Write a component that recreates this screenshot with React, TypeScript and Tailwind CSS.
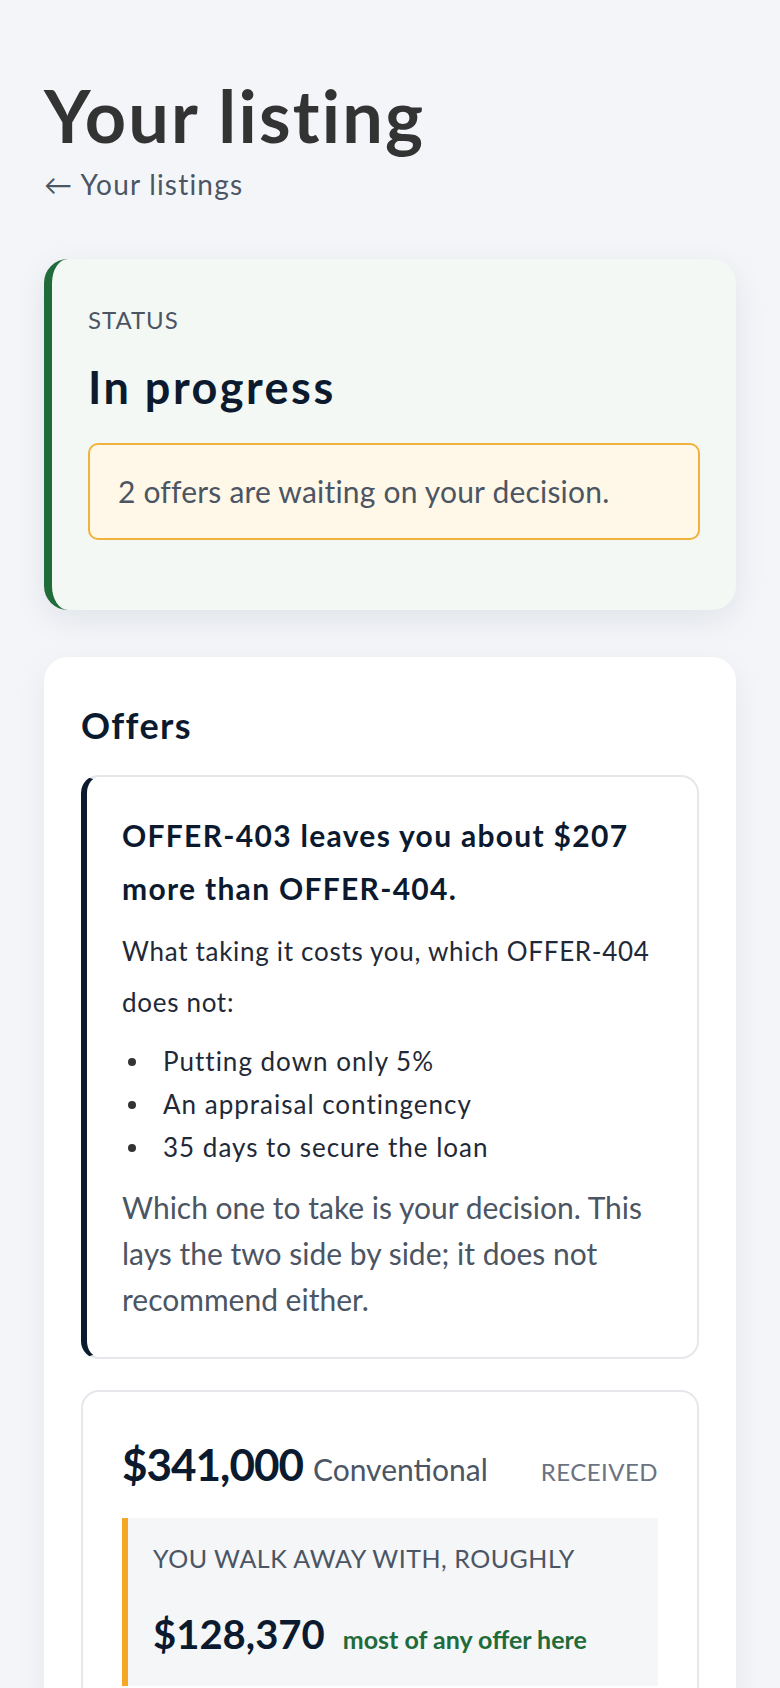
const BULLETS = ['Putting down only 5%', 'An appraisal contingency', '35 days to secure the loan'];

export default function App() {
    return (
        <div className="min-h-screen bg-[#f3f5f9] font-['Lato','Noto_Sans',sans-serif] px-[44px] pt-[75px] pb-16">
            {/* Header */}
            <h1 className="text-[72px] leading-[80px] font-bold tracking-[2.2px] text-[#333333]">Your listing</h1>
            <a className="block mt-[11px] text-[28px] leading-[36px] tracking-[1.2px] text-[#4b5563]">← Your listings</a>

            {/* Status */}
            <div className="mt-[57px] rounded-3xl border-l-8 border-[#1f6b3a] bg-[#f3f8f4] px-[36px] pt-[43px] pb-[70px] shadow-[0_10px_32px_rgba(15,23,42,0.08)]">
                <p className="text-[24px] leading-[36px] tracking-[0.04em] text-[#4b5563]">STATUS</p>
                <h2 className="mt-[23px] text-[45px] leading-[53px] font-bold tracking-[2.5px] text-[#0b1a2e]">In progress</h2>
                <div className="mt-[29px] rounded-[10px] border-2 border-[#f0b23a] bg-[#fff8e8] px-[28px] py-[24px]">
                    <p className="text-[30px] leading-[45px] tracking-[0.2px] text-[#4b5563]">2 offers are waiting on your decision.</p>
                </div>
            </div>

            {/* Offers */}
            <div className="mt-[47px] rounded-3xl bg-white px-[37px] pt-[47px] pb-10 shadow-[0_10px_32px_rgba(15,23,42,0.06)]">
                <h2 className="text-[36px] leading-[43px] font-bold tracking-[1.4px] text-[#0b1a2e]">Offers</h2>

                {/* Comparison */}
                <div className="mt-[28px] rounded-[18px] border-2 border-l-[6px] border-[#e5e7eb] border-l-[#0b1a2e] px-[35px] pt-[32px] pb-[35px]">
                    <p className="text-[30px] leading-[53px] font-bold tracking-[1.3px] text-[#0b1a2e]">
                        OFFER-403 leaves you about $207 more than OFFER-404.
                    </p>
                    <p className="mt-[11px] text-[26px] leading-[51px] tracking-[0.7px] text-[#1f2937]">
                        What taking it costs you, which OFFER-404 does not:
                    </p>
                    <ul className="mt-[12px] text-[26px] leading-[43px] tracking-[1px] text-[#1f2937]">
                        {BULLETS.map((b) => (
                            <li key={b} className="flex items-center">
                                <span className="ml-[6px] mr-[27px] h-[8px] w-[8px] shrink-0 rounded-full bg-[#333]" />
                                {b}
                            </li>
                        ))}
                    </ul>
                    <p className="mt-[15px] text-[30px] leading-[46px] text-[#4b5563]">
                        Which one to take is your decision. This lays the two side by side; it does not recommend either.
                    </p>
                </div>

                {/* Offer */}
                <div className="mt-[31px] rounded-[18px] border-2 border-[#e5e7eb] px-[39px] pt-[46px] pb-[40px]">
                    <div className="flex items-baseline justify-between">
                        <div className="flex items-baseline">
                            <span className="text-[44px] leading-[53px] font-bold tracking-[-1px] text-[#0b1a2e]">$341,000</span>
                            <span className="ml-[10px] text-[30px] leading-[40px] text-[#4b5563]">Conventional</span>
                        </div>
                        <span className="text-[24px] leading-[36px] tracking-[0.02em] text-[#6b7280]">RECEIVED</span>
                    </div>
                    <div className="mt-[27px] border-l-[6px] border-[#f5a623] bg-[#f4f6f8] pl-[25px] pr-6 pt-[22px] pb-[28px]">
                        <p className="text-[25px] leading-[36px] tracking-[0.02em] text-[#4b5563]">YOU WALK AWAY WITH, ROUGHLY</p>
                        <div className="mt-[34px] flex items-baseline">
                            <span className="text-[40px] leading-[48px] font-bold text-[#0b1a2e]">$128,370</span>
                            <span className="ml-[18px] text-[25px] leading-[36px] font-bold text-[#1f6b3a]">most of any offer here</span>
                        </div>
                    </div>
                </div>
            </div>
        </div>
    );
}
